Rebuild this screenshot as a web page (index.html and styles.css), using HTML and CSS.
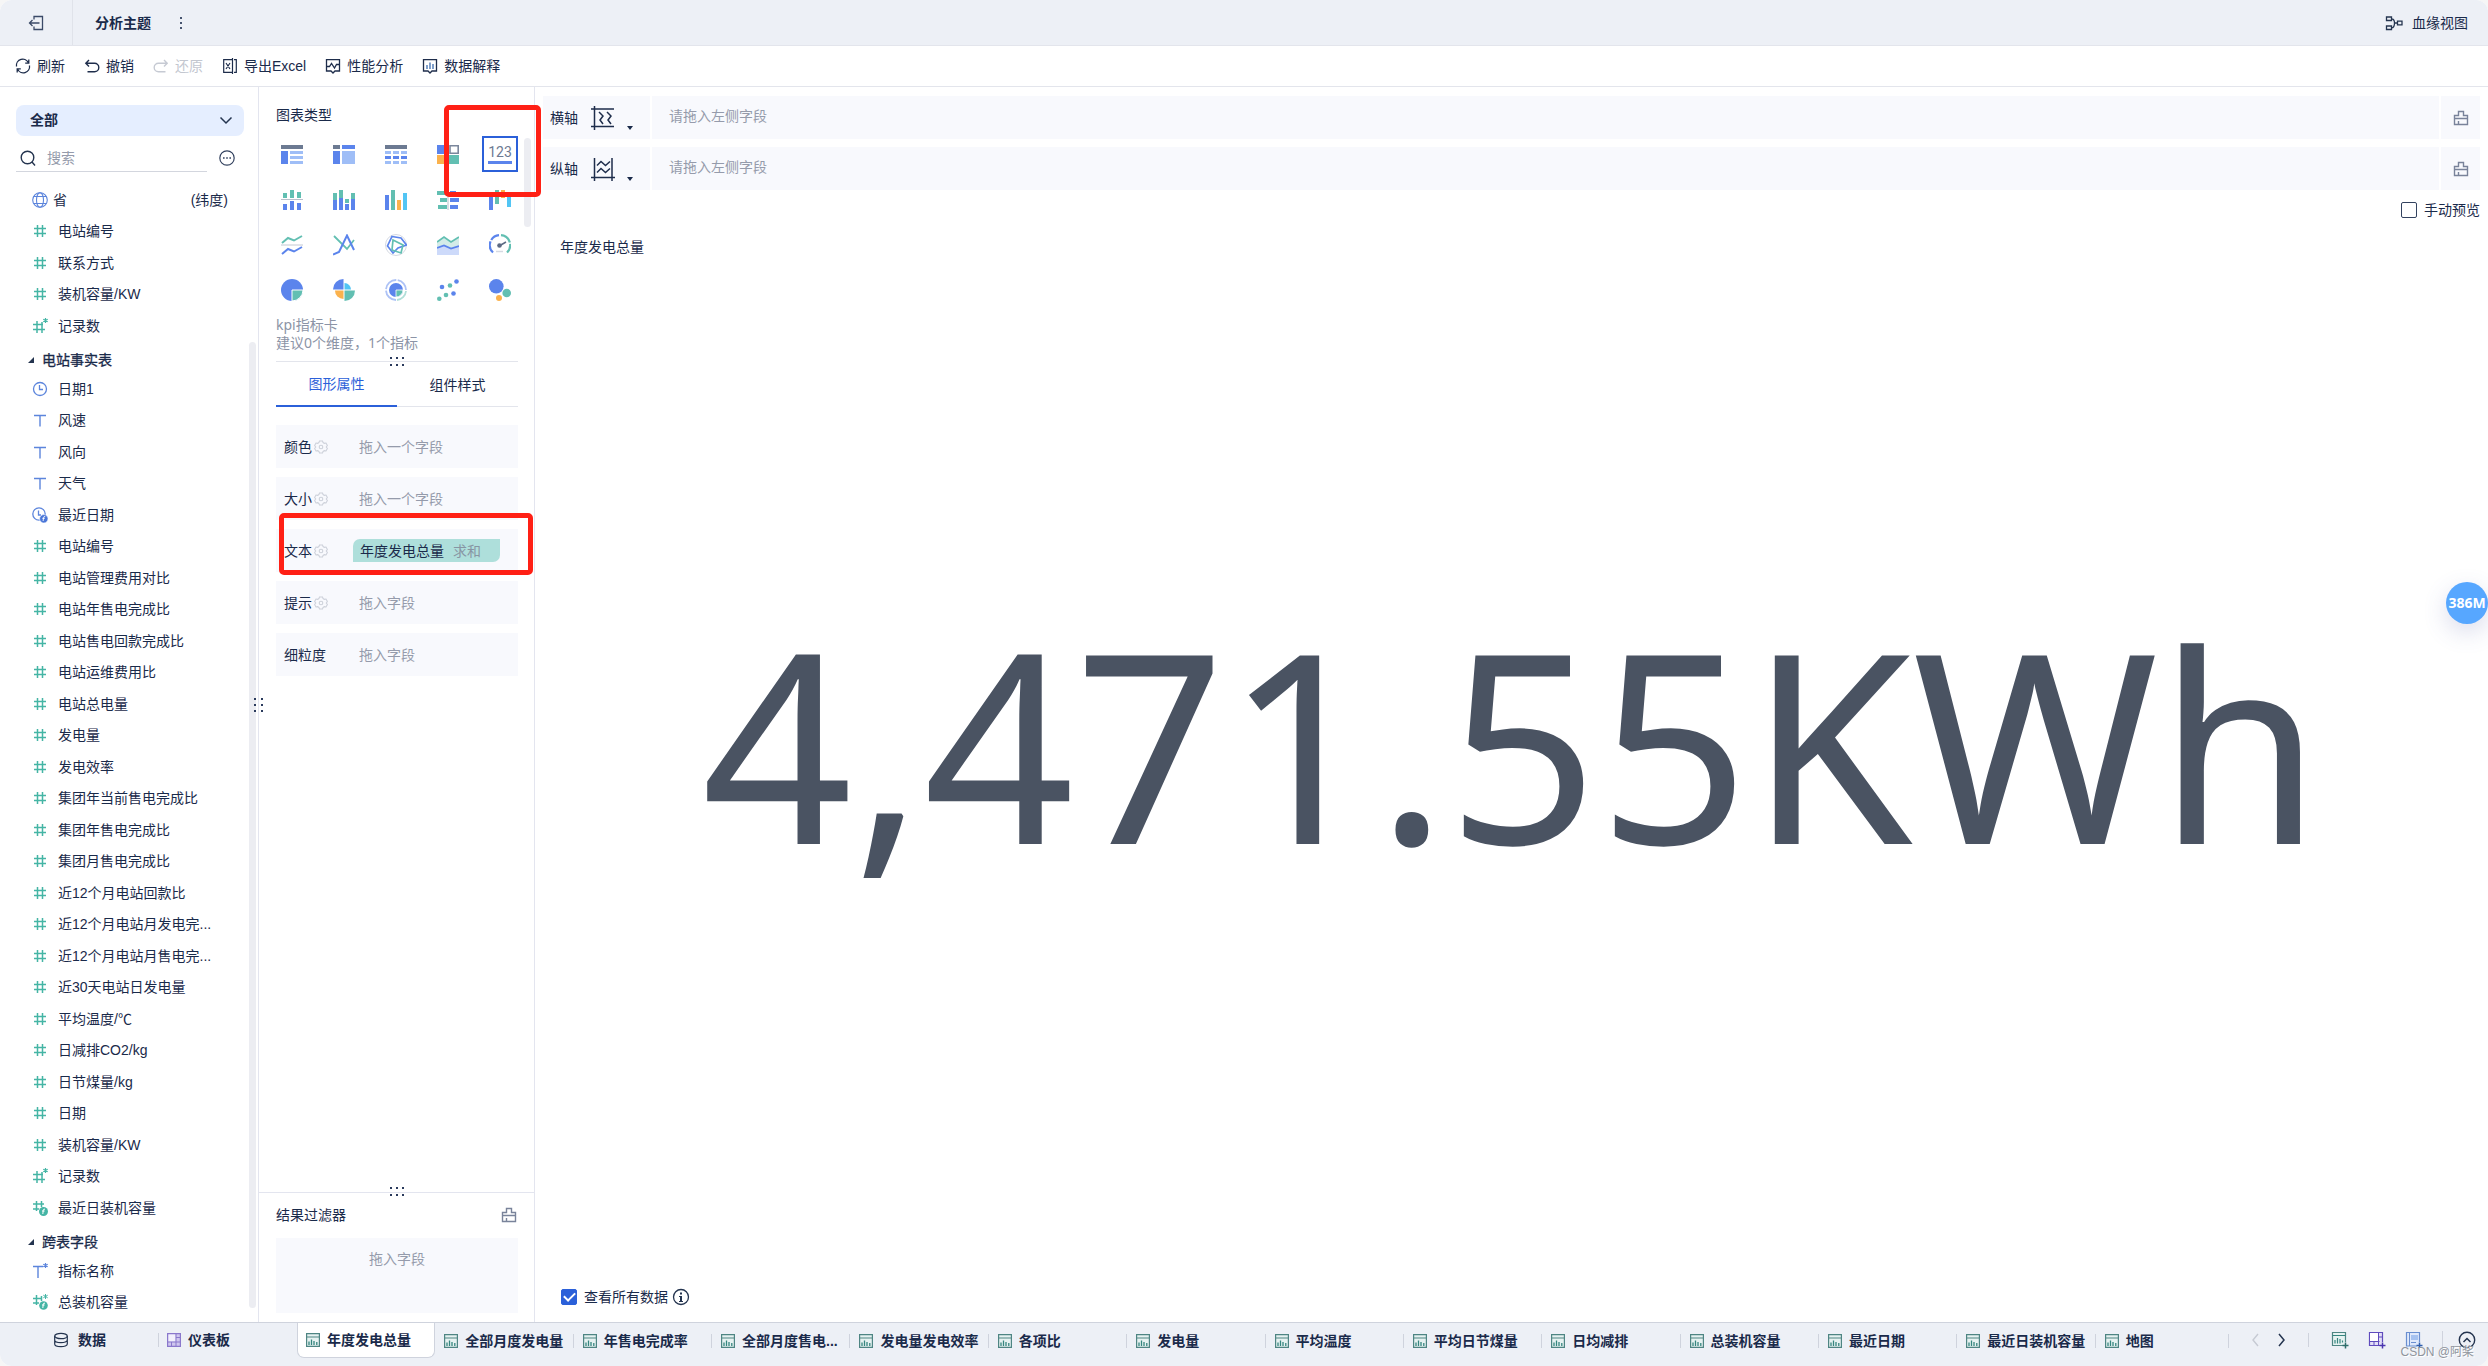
FILE: index.html
```html
<!DOCTYPE html>
<html lang="zh-CN">
<head>
<meta charset="utf-8">
<title>分析主题</title>
<link rel="stylesheet" href="styles.css">
</head>
<body>
<svg class="defs" aria-hidden="true">
  <symbol id="hash" viewBox="0 0 16 16"><path d="M5.500 2v12M10.500 2v12M2 5.500h12M2 10.500h12" fill="none" stroke="#45b5a5" stroke-width="1.500"/></symbol>
  <symbol id="hash-star" viewBox="0 0 16 16"><path d="M5 3v12M10 4v11M1 6.500h10M1 11.500h12" fill="none" stroke="#45b5a5" stroke-width="1.500"/><path d="M13.500 0v5M11.300 1.200l4.400 2.600M15.700 1.200l-4.400 2.600" stroke="#45b5a5" stroke-width="1.200"/></symbol>
  <symbol id="hash-fn" viewBox="0 0 16 16"><path d="M4.500 1v10M9.500 1v6M1 4h11M1 9h6" fill="none" stroke="#45b5a5" stroke-width="1.500"/><circle cx="11.500" cy="11.500" r="4.500" fill="#45b5a5"/><path d="M13 9.200q-1.500-.5-1.700 1l-.5 3.800M10 11h2.600" fill="none" stroke="#fff"/></symbol>
  <symbol id="hash-fn-star" viewBox="0 0 16 16"><path d="M4.500 1v10M9.500 2v5M1 4.500h9M1 9h6" fill="none" stroke="#45b5a5" stroke-width="1.500"/><path d="M13.500 0v5M11.300 1.200l4.400 2.600M15.700 1.200l-4.400 2.600" stroke="#45b5a5"/><circle cx="11.500" cy="11.500" r="4.300" fill="#45b5a5"/><path d="M13 9.200q-1.500-.5-1.700 1l-.5 3.800M10 11h2.600" fill="none" stroke="#fff"/></symbol>
  <symbol id="text" viewBox="0 0 16 16"><path d="M2 3.500h12M8 3.500v11" fill="none" stroke="#5c85dc" stroke-width="1.400"/></symbol>
  <symbol id="text-star" viewBox="0 0 16 16"><path d="M1 3.500h10M6 3.500v11.500" fill="none" stroke="#5c85dc" stroke-width="1.400"/><path d="M13.500 0v5M11.300 1.200l4.400 2.600M15.700 1.200l-4.400 2.600" stroke="#5c85dc" stroke-width="1.200"/></symbol>
  <symbol id="clock" viewBox="0 0 16 16"><circle cx="8" cy="8" r="6.500" fill="none" stroke="#5c85dc" stroke-width="1.300"/><path d="M7.500 4v4.500H11" fill="none" stroke="#5c85dc" stroke-width="1.300"/></symbol>
  <symbol id="clock-fn" viewBox="0 0 16 16"><circle cx="7" cy="7" r="6.200" fill="none" stroke="#5c85dc" stroke-width="1.300"/><path d="M6.500 3.500V8H9" fill="none" stroke="#5c85dc" stroke-width="1.300"/><circle cx="11.800" cy="11.800" r="4.200" fill="#4a76d8" stroke="#fff" stroke-width=".6"/><path d="M13.200 9.600q-1.400-.5-1.600 1l-.5 3.400M10.300 11.300h2.500" fill="none" stroke="#fff" stroke-width=".9"/></symbol>
  <symbol id="globe" viewBox="0 0 16 16"><g fill="none" stroke="#5c85dc" stroke-width="1.100"><circle cx="8" cy="8" r="7.300"/><ellipse cx="8" cy="8" rx="3.500" ry="7.300"/><path d="M1.500 4.500h13M1.500 11.500h13"/></g></symbol>
  <symbol id="brush" viewBox="0 0 16 16"><path d="M1.500 14.500v-9h4v-4h5v4h4v9zM1.500 8.500h13M5.500 14.500v-3.500" fill="none" stroke="#79839a" stroke-width="1.400"/></symbol>
  <symbol id="gear" viewBox="0 0 14 14"><path d="M5.500 1h3l.6 1.600 1.200.7 1.700-.3 1.400 2.500L12.300 7l1.100 1.500L12 11l-1.700-.3-1.200.7-.6 1.600h-3l-.6-1.600-1.200-.7L2 11 .6 8.500 1.700 7 .6 5.500 2 3l1.700.3 1.200-.7z" fill="none" stroke="#cdd1da" stroke-width="1.100"/><circle cx="7" cy="7" r="1.800" fill="none" stroke="#cdd1da" stroke-width="1.100"/></symbol>
  <symbol id="chart" viewBox="0 0 14 14"><path d="M.600.600h12.800v12.800H.600z" fill="#e6f2f1" stroke="#4e8583" stroke-width="1.200"/><path d="M.600 4h12.800" stroke="#4e8583"/><path d="M3 8.500V12M5.500 6.500V12M8 8V12M10.800 9V12" stroke="#35857f" stroke-width="1.300"/></symbol>
  <symbol id="dots-h" viewBox="0 0 16 10"><path d="M1 0h2v2H1zM7 0h2v2H7zM13 0h2v2h-2zM1 7h2v2H1zM7 7h2v2H7zM13 7h2v2h-2z" fill="#2a3a5c"/></symbol>
  <symbol id="dots-v" viewBox="0 0 10 14"><path d="M0 0h2v2H0zM7 0h2v2H7zM0 6h2v2H0zM7 6h2v2H7zM0 12h2v2H0zM7 12h2v2H7z" fill="#2a3a5c"/></symbol>
</svg>

<div class="app">
  <header class="header">
    <button class="exit" aria-label="退出"><svg class="i16" viewBox="0 0 16 16"><path d="M6 4.500V1.500h8.500v13H6V11.500M11.500 8H1.500M4.500 5L1.500 8l3 3" fill="none" stroke="#3b4a68" stroke-width="1.300"/></svg></button>
    <h1 class="title">分析主题</h1>
    <button class="more" aria-label="更多"><svg class="i16" viewBox="0 0 16 16"><path d="M7 2h2v2H7zM7 7h2v2H7zM7 12h2v2H7z" fill="#46546f"/></svg></button>
    <button class="lineage"><svg class="i18" viewBox="0 0 18 18"><path d="M1.500 3h5v3.500h-5zM1.500 12h5v3.500h-5zM12.500 7.200H17v3.600h-4.500zM6.500 4.800q3 0 3 4.200q0 4.800-3 4.800M9.500 9h3" fill="none" stroke="#24344f" stroke-width="1.300"/></svg>血缘视图</button>
  </header>

  <nav class="toolbar">
    <button><svg class="i16" viewBox="0 0 16 16"><path d="M1.500 8.500A6.300 6.300 0 0 1 13.500 5M14.500 7.500A6.300 6.300 0 0 1 2.500 11M13.800 1.500V5.200H10.200M2.200 14.500V10.800H5.800" fill="none" stroke="#1e2d4b" stroke-width="1.300"/></svg>刷新</button>
    <button><svg class="i16" viewBox="0 0 16 16"><path d="M5 2L1.800 5.200 5 8.400M2 5.200H10.500a4.300 4.300 0 0 1 0 8.600H3.500" fill="none" stroke="#1e2d4b" stroke-width="1.400"/></svg>撤销</button>
    <button disabled><svg class="i16" viewBox="0 0 16 16"><path d="M11 2l3.200 3.200L11 8.400M14 5.200H5.500a4.300 4.300 0 0 0 0 8.600h7" fill="none" stroke="#c6cad3" stroke-width="1.400"/></svg>还原</button>
    <button><svg class="i16" viewBox="0 0 16 16"><path d="M10 1.700H1.700v12.600H10M12 1.700h2.300v12.600H12M10.500 0v16M4 5l4 6M8 5l-4 6" fill="none" stroke="#1e2d4b" stroke-width="1.200"/></svg>导出Excel</button>
    <button><svg class="i16" viewBox="0 0 16 16"><path d="M6 13H1.500V1.700h13V13H10l-2 2zM2 8.500h2.500L6.500 5.500l3 4.500 2-3.500L14 6.500" fill="none" stroke="#1e2d4b" stroke-width="1.300"/></svg>性能分析</button>
    <button><svg class="i16" viewBox="0 0 16 16"><path d="M6 13H1.500V1.700h13V13H10l-2 2z" fill="none" stroke="#1e2d4b" stroke-width="1.300"/><path d="M5 7v4M8 4.500V11M11 6v5" stroke="#4b78b5" stroke-width="1.400"/></svg>数据解释</button>
  </nav>

  <div class="workspace">
    <aside class="fields">
      <button class="scope">全部<svg class="i14" viewBox="0 0 14 14"><path d="M1.500 4.500L7 10l5.500-5.500" fill="none" stroke="#24344f" stroke-width="1.500"/></svg></button>
      <div class="search-row">
        <label class="search"><svg class="i16" viewBox="0 0 16 16"><circle cx="7.500" cy="7.500" r="6.300" fill="none" stroke="#24344f" stroke-width="1.400"/><path d="M12 12l3 3.500" stroke="#24344f" stroke-width="1.400"/></svg><input type="text" placeholder="搜索" aria-label="搜索"></label>
        <button aria-label="更多选项"><svg class="i16" viewBox="0 0 16 16"><circle cx="8" cy="8" r="7.200" fill="none" stroke="#33425f" stroke-width="1.200"/><path d="M4 7.200h1.600v1.600H4zM7.200 7.200h1.600v1.600H7.200zM10.400 7.200H12v1.600h-1.600z" fill="#33425f"/></svg></button>
      </div>
      <ul class="field-list">
        <li class="geo"><svg class="i16"><use href="#globe"/></svg><span>省</span><em>(纬度)</em></li>
        <li><svg class="i16"><use href="#hash"/></svg>电站编号</li>
        <li><svg class="i16"><use href="#hash"/></svg>联系方式</li>
        <li><svg class="i16"><use href="#hash"/></svg>装机容量/KW</li>
        <li><svg class="i16"><use href="#hash-star"/></svg>记录数</li>
        <li class="group"><i class="tri"></i>电站事实表</li>
        <li><svg class="i16"><use href="#clock"/></svg>日期1</li>
        <li><svg class="i16"><use href="#text"/></svg>风速</li>
        <li><svg class="i16"><use href="#text"/></svg>风向</li>
        <li><svg class="i16"><use href="#text"/></svg>天气</li>
        <li><svg class="i16"><use href="#clock-fn"/></svg>最近日期</li>
        <li><svg class="i16"><use href="#hash"/></svg>电站编号</li>
        <li><svg class="i16"><use href="#hash"/></svg>电站管理费用对比</li>
        <li><svg class="i16"><use href="#hash"/></svg>电站年售电完成比</li>
        <li><svg class="i16"><use href="#hash"/></svg>电站售电回款完成比</li>
        <li><svg class="i16"><use href="#hash"/></svg>电站运维费用比</li>
        <li><svg class="i16"><use href="#hash"/></svg>电站总电量</li>
        <li><svg class="i16"><use href="#hash"/></svg>发电量</li>
        <li><svg class="i16"><use href="#hash"/></svg>发电效率</li>
        <li><svg class="i16"><use href="#hash"/></svg>集团年当前售电完成比</li>
        <li><svg class="i16"><use href="#hash"/></svg>集团年售电完成比</li>
        <li><svg class="i16"><use href="#hash"/></svg>集团月售电完成比</li>
        <li><svg class="i16"><use href="#hash"/></svg>近12个月电站回款比</li>
        <li><svg class="i16"><use href="#hash"/></svg>近12个月电站月发电完...</li>
        <li><svg class="i16"><use href="#hash"/></svg>近12个月电站月售电完...</li>
        <li><svg class="i16"><use href="#hash"/></svg>近30天电站日发电量</li>
        <li><svg class="i16"><use href="#hash"/></svg>平均温度/℃</li>
        <li><svg class="i16"><use href="#hash"/></svg>日减排CO2/kg</li>
        <li><svg class="i16"><use href="#hash"/></svg>日节煤量/kg</li>
        <li><svg class="i16"><use href="#hash"/></svg>日期</li>
        <li><svg class="i16"><use href="#hash"/></svg>装机容量/KW</li>
        <li><svg class="i16"><use href="#hash-star"/></svg>记录数</li>
        <li><svg class="i16"><use href="#hash-fn"/></svg>最近日装机容量</li>
        <li class="group"><i class="tri"></i>跨表字段</li>
        <li><svg class="i16"><use href="#text-star"/></svg>指标名称</li>
        <li><svg class="i16"><use href="#hash-fn-star"/></svg>总装机容量</li>
      </ul>
      <i class="scroll scroll-fields"></i>
      <svg class="grip-v"><use href="#dots-v"/></svg>
    </aside>

    <section class="config">
      <div class="types">
        <h2>图表类型</h2>
        <div class="type-grid">
          <button aria-label="分组表"><svg viewBox="0 0 22 22"><path d="M0 1h22v4H0z" fill="#6c7a92"/><path d="M0 7h7v13H0z" fill="#5b84ec"/><path d="M9 7h13v3H9zM9 12h13v3H9zM9 17h13v3H9z" fill="#9fbef7"/></svg></button>
          <button aria-label="交叉表"><svg viewBox="0 0 22 22"><path d="M0 1h7v4H0z" fill="#6c7a92"/><path d="M0 7h7v13H0zM9 1h13v4H9z" fill="#5b84ec"/><path d="M9 7h13v13H9z" fill="#9fbef7"/></svg></button>
          <button aria-label="明细表"><svg viewBox="0 0 22 22"><path d="M0 1h22v4H0z" fill="#6c7a92"/><path d="M0 7h6v3H0zM8 7h6v3H8zM16 7h6v3h-6zM0 17h6v3H0zM8 17h6v3H8zM16 17h6v3h-6z" fill="#9fbef7"/><path d="M0 12h6v3H0zM8 12h6v3H8zM16 12h6v3h-6z" fill="#5b84ec"/></svg></button>
          <button aria-label="颜色表"><svg viewBox="0 0 22 22"><path d="M0 1h10v9H0z" fill="#5b84ec"/><path d="M0 11h10v9H0z" fill="#fbb24d"/><path d="M12 11h10v9H12z" fill="#62bfb2"/><path d="M13 1.800h8.200v7.400H13z" fill="#fff" stroke="#7b879c" stroke-width="1.600"/></svg></button>
          <button class="selected" aria-label="kpi指标卡"><span>123</span></button>
          <button aria-label="对比柱状图"><svg viewBox="0 0 22 22"><path d="M2 4h4v5H2zM9 1h4v8H9zM16 3h4v6h-4z" fill="#62bfb2"/><path d="M0 10.500h22" stroke="#b9bfcb"/><path d="M2 15h4v6H2zM9 12h4v9H9zM16 14h4v7h-4z" fill="#5b84ec"/></svg></button>
          <button aria-label="堆积柱状图"><svg viewBox="0 0 22 22"><path d="M0 4h4v7H0zM6 1h4v8H6zM12 10h4v4h-4zM18 4h4v6h-4z" fill="#62bfb2"/><path d="M0 11h4v10H0zM6 9h4v12H6zM12 15h4v6h-4zM18 10h4v11h-4z" fill="#5b84ec"/></svg></button>
          <button aria-label="分区柱状图"><svg viewBox="0 0 22 22"><path d="M0 6h4v15H0z" fill="#5b84ec"/><path d="M6 1h4v20H6z" fill="#62bfb2"/><path d="M12 11h4v10h-4z" fill="#fbb24d"/><path d="M18 4h4v17h-4z" fill="#52c5f4"/></svg></button>
          <button aria-label="对比条形图"><svg viewBox="0 0 22 22"><path d="M0 2h10v4H0zM3 9h7v4H3zM1 16h9v4H1z" fill="#62bfb2"/><path d="M11 1v20" stroke="#b9bfcb"/><path d="M13 2h6v4h-6zM13 9h9v4h-9zM13 16h8v4h-8z" fill="#5b84ec"/></svg></button>
          <button aria-label="瀑布图"><svg viewBox="0 0 22 22"><path d="M0 3h4v18H0z" fill="#5b84ec"/><path d="M6 1h4v14H6z" fill="#62bfb2"/><path d="M12 1h4v8h-4z" fill="#fbb24d"/><path d="M18 6h4v12h-4z" fill="#52c5f4"/></svg></button>
          <button aria-label="分区折线图"><svg viewBox="0 0 22 22"><path d="M1 9l6-5 6 2.500L21 2" fill="none" stroke="#62bfb2" stroke-width="2"/><path d="M0 11h22" stroke="#c3c8d2"/><path d="M1 20l6-5 6 2.500 8-4.500" fill="none" stroke="#5b84ec" stroke-width="2"/></svg></button>
          <button aria-label="多系列折线图"><svg viewBox="0 0 22 22"><path d="M1 2l13 13 7-9" fill="none" stroke="#62bfb2" stroke-width="1.800"/><path d="M0 20.500l6-2.500L14 1.500 21 16" fill="none" stroke="#5b84ec" stroke-width="2"/></svg></button>
          <button aria-label="雷达图"><svg viewBox="0 0 22 22"><circle cx="11" cy="11" r="10.500" fill="none" stroke="#d5d9e2"/><path d="M7 2.500l9 1.500 5.500 7-8.500 3-5 5-5.500-7z" fill="none" stroke="#5b84ec" stroke-width="1.700"/><path d="M8 6l10 5-2 8-9-3z" fill="none" stroke="#62bfb2" stroke-width="1.700"/></svg></button>
          <button aria-label="面积图"><svg viewBox="0 0 22 22"><path d="M0 8l7-5 7 5 8-5v11H0z" fill="#d3ece8"/><path d="M0 14l7-3 7 3 8-3v10H0z" fill="#cddafa"/><path d="M0 8l7-5 7 5 8-5" fill="none" stroke="#62bfb2" stroke-width="1.700"/><path d="M0 14l7-2.500 7 3 8-2.500" fill="none" stroke="#5b84ec" stroke-width="1.700"/></svg></button>
          <button aria-label="仪表盘"><svg viewBox="0 0 22 22"><path d="M4 18.500A10 10 0 0 1 10 1.200" fill="none" stroke="#5b84ec" stroke-width="2.200" stroke-dasharray="12 1.500"/><path d="M12 1.200a10 10 0 0 1 6 17.300" fill="none" stroke="#62bfb2" stroke-width="2.200" stroke-dasharray="12 1.500"/><circle cx="10.500" cy="11.500" r="2.300" fill="#5c6a83"/><path d="M11 11.500l6-3.500" stroke="#5c6a83" stroke-width="1.500"/><path d="M7 17.500h7" stroke="#d5d9e2" stroke-width="1.500"/></svg></button>
          <button aria-label="饼图"><svg viewBox="0 0 22 22"><circle cx="11" cy="11" r="11" fill="#5b84ec"/><path d="M11 11h11a11 11 0 0 1-11 11z" fill="#62bfb2" stroke="#fff"/></svg></button>
          <button aria-label="玫瑰图"><svg viewBox="0 0 22 22"><path d="M10.500 10.500H0A10.500 10.500 0 0 1 10.500 0z" fill="#5b84ec"/><path d="M11.500 10.500V4a6.500 6.500 0 0 1 6.500 6.500z" fill="#52c5f4"/><path d="M10.500 11.500V20A8.500 8.500 0 0 1 2 11.500z" fill="#fbb24d"/><path d="M11.500 11.500H22A10.500 10.500 0 0 1 11.500 22z" fill="#62bfb2"/></svg></button>
          <button aria-label="多层饼图"><svg viewBox="0 0 22 22"><path d="M11 21A10 10 0 1 1 21 11" fill="none" stroke="#adc2f6" stroke-width="1.800" stroke-dasharray="15 1.500"/><path d="M21 12a10 10 0 0 1-9 9" fill="none" stroke="#b1dfd8" stroke-width="1.800"/><circle cx="11" cy="11" r="7" fill="#5b84ec"/><path d="M11 11h7a7 7 0 0 1-7 7z" fill="#62bfb2" stroke="#fff" stroke-width=".8"/></svg></button>
          <button aria-label="散点图"><svg viewBox="0 0 22 22"><g fill="#5b84ec"><circle cx="5" cy="8" r="2.300"/><circle cx="19.500" cy="2.500" r="2.300"/><circle cx="16.500" cy="14.500" r="2.300"/></g><g fill="#62bfb2"><circle cx="13" cy="6.500" r="2.300"/><circle cx="9" cy="16" r="2.300"/><circle cx="2.300" cy="19.700" r="2.300"/></g></svg></button>
          <button aria-label="气泡图"><svg viewBox="0 0 22 22"><circle cx="7.300" cy="7.300" r="7.300" fill="#5b84ec"/><circle cx="17.700" cy="14" r="4.300" fill="#62bfb2"/><circle cx="10" cy="19" r="3" fill="#fbb24d"/></svg></button>
        </div>
        <p class="hint">kpi指标卡<br>建议0个维度，1个指标</p>
        <i class="scroll scroll-types"></i>
        <svg class="grip-h"><use href="#dots-h"/></svg>
        <i class="mark mark-type"></i>
      </div>
      <div class="tabs">
        <button class="active">图形属性</button>
        <button>组件样式</button>
      </div>
      <div class="props">
        <div class="prop"><span class="name">颜色<svg class="i14"><use href="#gear"/></svg></span><span class="ph">拖入一个字段</span></div>
        <div class="prop"><span class="name">大小<svg class="i14"><use href="#gear"/></svg></span><span class="ph">拖入一个字段</span></div>
        <div class="prop"><span class="name">文本<svg class="i14"><use href="#gear"/></svg></span><span class="chip">年度发电总量<em>求和</em></span><i class="mark mark-text"></i></div>
        <div class="prop"><span class="name">提示<svg class="i14"><use href="#gear"/></svg></span><span class="ph">拖入字段</span></div>
        <div class="prop"><span class="name">细粒度</span><span class="ph">拖入字段</span></div>
      </div>
      <div class="filter">
        <svg class="grip-h"><use href="#dots-h"/></svg>
        <div class="filter-head"><h2>结果过滤器</h2><button aria-label="清空"><svg class="i16"><use href="#brush"/></svg></button></div>
        <div class="drop">拖入字段</div>
      </div>
    </section>

    <main class="main">
      <div class="axis">
        <div class="axis-name">横轴<button aria-label="横轴设置"><svg class="i24" viewBox="0 0 24 24"><path d="M3.500 0v24M0 3h23M0 20.500h23M8 6l4 4-3 4 3 4M16 6l4 4-3 4 3 4" fill="none" stroke="#1e2d4b" stroke-width="1.500"/></svg><i class="caret"></i></button></div>
        <div class="axis-drop">请拖入左侧字段</div>
        <button class="axis-clear" aria-label="清空横轴"><svg class="i16"><use href="#brush"/></svg></button>
      </div>
      <div class="axis">
        <div class="axis-name">纵轴<button aria-label="纵轴设置"><svg class="i24" viewBox="0 0 24 24"><path d="M3.500 1v23M21 1v23M0 20.500h24M6 8.500l4-4 4.500 4 4.500-4M6 15.500l4-4 4.500 4 4.500-4" fill="none" stroke="#1e2d4b" stroke-width="1.500"/></svg><i class="caret"></i></button></div>
        <div class="axis-drop">请拖入左侧字段</div>
        <button class="axis-clear" aria-label="清空纵轴"><svg class="i16"><use href="#brush"/></svg></button>
      </div>
      <label class="check preview"><input type="checkbox">手动预览</label>
      <h2 class="card-title">年度发电总量</h2>
      <div class="kpi">4,471.55KWh</div>
      <div class="view-all"><label class="check"><input type="checkbox" checked>查看所有数据</label><svg class="i18" viewBox="0 0 18 18"><circle cx="9" cy="9" r="7.500" fill="none" stroke="#24344f" stroke-width="1.300"/><path d="M8 4.500h2v2H8zM7 8h3v5h1v1H7v-1h1V9H7z" fill="#24344f"/></svg></div>
    </main>
  </div>

  <footer class="footer">
    <div class="fixed-tabs">
      <button class="data"><svg class="i16" viewBox="0 0 16 16"><g fill="none" stroke="#24344f" stroke-width="1.200"><ellipse cx="8" cy="4" rx="6.300" ry="2.700"/><path d="M1.700 4v8c0 3.600 12.600 3.600 12.600 0V4M1.700 8c0 3.600 12.600 3.600 12.600 0"/></g></svg>数据</button>
      <button class="board"><svg class="i14" viewBox="0 0 14 14"><path d="M.600.600h12.800v12.800H.600z" fill="#cfc6ee" stroke="#8a78cc" stroke-width="1.200"/><path d="M1.500 1.500h7v7h-7z" fill="#f2f0fc"/><path d="M9 0v14M0 9h14M9 4.500h5M4.500 9v5" stroke="#8a78cc"/></svg>仪表板</button>
    </div>
    <div class="sheets">
      <button class="active"><svg class="i14"><use href="#chart"/></svg>年度发电总量</button>
      <button><svg class="i14"><use href="#chart"/></svg>全部月度发电量</button>
      <button><svg class="i14"><use href="#chart"/></svg>年售电完成率</button>
      <button><svg class="i14"><use href="#chart"/></svg>全部月度售电...</button>
      <button><svg class="i14"><use href="#chart"/></svg>发电量发电效率</button>
      <button><svg class="i14"><use href="#chart"/></svg>各项比</button>
      <button><svg class="i14"><use href="#chart"/></svg>发电量</button>
      <button><svg class="i14"><use href="#chart"/></svg>平均温度</button>
      <button><svg class="i14"><use href="#chart"/></svg>平均日节煤量</button>
      <button><svg class="i14"><use href="#chart"/></svg>日均减排</button>
      <button><svg class="i14"><use href="#chart"/></svg>总装机容量</button>
      <button><svg class="i14"><use href="#chart"/></svg>最近日期</button>
      <button><svg class="i14"><use href="#chart"/></svg>最近日装机容量</button>
      <button><svg class="i14"><use href="#chart"/></svg>地图</button>
    </div>
    <div class="sheet-tools">
      <div class="pager">
        <button aria-label="上一页" disabled><svg class="i14" viewBox="0 0 14 14"><path d="M10 1L5 7l5 6" fill="none" stroke="#c6cad3" stroke-width="1.400"/></svg></button>
        <button aria-label="下一页"><svg class="i14" viewBox="0 0 14 14"><path d="M4 1l5 6-5 6" fill="none" stroke="#24344f" stroke-width="1.500"/></svg></button>
      </div>
      <div class="adders">
        <button aria-label="添加组件"><svg class="i18" viewBox="0 0 18 18"><path d="M12 14.500H1.500V1.500h13V11" fill="#e6f2f1" stroke="#4e8583" stroke-width="1.200"/><path d="M1.500 4.500h13M4 9v3.500M6.500 7v5.500M9 8v4.500M11.500 9.500v2" stroke="#35857f" stroke-width="1.200"/><path d="M14.500 11.500v6M11.500 14.500h6" stroke="#2f6e6b" stroke-width="1.500"/></svg></button>
        <button aria-label="添加仪表板"><svg class="i18" viewBox="0 0 18 18"><path d="M12 14.500H1.500V1.500h13V11" fill="#e3dff7" stroke="#5f4bbd" stroke-width="1.200"/><path d="M2 2h8v8H2z" fill="#fff"/><path d="M10.500 1.500v13M1.500 10.500h10M10.500 6h4M6 10.500v4" stroke="#5f4bbd"/><path d="M14.500 11.500v6M11.500 14.500h6" stroke="#4a35b0" stroke-width="1.500"/></svg></button>
        <button aria-label="添加报告"><svg class="i18" viewBox="0 0 18 18"><path d="M12 15H1.500V1.500h13V11" fill="#dfe9fb" stroke="#6a8fd0" stroke-width="1.200"/><path d="M4.500 1.500V15" stroke="#6a8fd0"/><path d="M6 4h7v5H6z" fill="#a6c2f0"/><path d="M6 11.500h5" stroke="#6a8fd0"/><path d="M14.500 11.500v6M11.500 14.500h6" stroke="#2f5fae" stroke-width="1.500"/></svg></button>
      </div>
      <button class="collapse" aria-label="收起"><svg class="i18" viewBox="0 0 18 18"><circle cx="9" cy="9" r="7.700" fill="none" stroke="#24344f" stroke-width="1.400"/><path d="M5.500 11L9 7.500l3.500 3.500" fill="none" stroke="#24344f" stroke-width="1.500"/></svg></button>
    </div>
    <span class="watermark">CSDN @阿桨</span>
  </footer>
  <div class="memory">386M</div>
</div>
</body>
</html>
```
FILE: styles.css
```css
* { box-sizing: border-box; }

body {
  margin: 0;
  background: #f6f6f6;
  color: #1a2a4a;
  font: 14px/20px "Liberation Sans", "Noto Sans CJK SC", sans-serif;
}

button {
  display: flex;
  align-items: center;
  padding: 0;
  border: 0;
  background: none;
  color: inherit;
  font: inherit;
  white-space: nowrap;
}

h1, h2, p, ul { margin: 0; padding: 0; font: inherit; }
em, i { font-style: normal; }
svg { display: block; flex: none; }

.defs { position: absolute; width: 0; height: 0; }
.i14 { width: 14px; height: 14px; }
.i16 { width: 16px; height: 16px; }
.i18 { width: 18px; height: 18px; }
.i24 { width: 24px; height: 24px; }

.app {
  position: relative;
  display: flex;
  flex-direction: column;
  min-height: 100vh;
  overflow: hidden;
  border-radius: 12px;
  background: #fff;
}

/* header and toolbar */
.header {
  display: flex;
  align-items: center;
  height: 46px;
  padding-right: 20px;
  background: #edf0f6;
  border-bottom: 1px solid #e3e5ec;
}
.exit {
  justify-content: center;
  width: 73px;
  height: 45px;
  border-right: 1px solid #e0e3ea;
}
.title { margin: 0 22px; font-weight: bold; }
.lineage { gap: 9px; margin-left: auto; }

.toolbar {
  display: flex;
  align-items: center;
  gap: 19px;
  height: 41px;
  padding-left: 15px;
  border-bottom: 1px solid #e3e5ec;
}
.toolbar button { gap: 6px; }
.toolbar button:disabled { color: #c3c7d0; }

.workspace { display: flex; flex: 1; }

/* field list */
.fields {
  position: relative;
  display: flex;
  flex-direction: column;
  flex: none;
  width: 259px;
  padding: 18px 14px 4px 16px;
  border-right: 1px solid #e3e5ef;
}
.scope {
  justify-content: space-between;
  height: 31px;
  padding: 0 11px 2px 14px;
  border-radius: 8px;
  background: #e5eeff;
  font-weight: bold;
}
.search-row { display: flex; align-items: center; gap: 12px; height: 36px; margin-bottom: 12px; }
.search {
  display: flex;
  align-items: center;
  gap: 9px;
  width: 191px;
  height: 36px;
  padding: 8px 4px 0;
  border-bottom: 1px solid #d3d6de;
}
.search-row button { height: 36px; padding-top: 8px; }
.search input {
  flex: 1;
  min-width: 0;
  border: 0;
  outline: 0;
  background: none;
  font: inherit;
}
input::placeholder { color: #959bab; opacity: 1; }

.field-list {
  display: grid;
  grid-auto-rows: 1fr;
  flex: 1;
  list-style: none;
}
.field-list li {
  display: flex;
  align-items: center;
  gap: 10px;
  min-height: 24px;
  padding-left: 16px;
  white-space: nowrap;
}
.field-list .geo { gap: 5px; padding-right: 16px; }
.geo em { margin-left: auto; }
.field-list .group { gap: 8px; padding: 6px 0 0 12px; -webkit-text-stroke: 0.3px #1a2a4a; }
.tri { border-left: 6px solid transparent; border-bottom: 6px solid #24344f; }

.scroll { position: absolute; width: 7px; border-radius: 4px; background: #ecedf2; }
.scroll-fields { top: 255px; bottom: 14px; right: 2px; }
.scroll-types { top: 51px; right: 3px; height: 89px; }

.grip-v { position: absolute; top: 50%; right: -6px; width: 10px; height: 14px; margin-top: -7px; }
.grip-h { position: absolute; left: 50%; bottom: -5px; width: 16px; height: 10px; margin-left: -8px; }

/* chart configuration */
.config {
  display: flex;
  flex-direction: column;
  flex: none;
  width: 276px;
  border-right: 1px solid #e3e5ef;
}
.types { position: relative; margin-left: 17px; padding: 18px 16px 10px 0; }
.types::after {
  content: "";
  position: absolute;
  left: 0;
  right: 16px;
  bottom: 0;
  border-bottom: 1px solid #e3e5ec;
}
.types .grip-h { margin-left: -16px; }
.type-grid {
  display: grid;
  grid-template-columns: repeat(5, 36px);
  grid-auto-rows: 36px;
  justify-content: space-between;
  row-gap: 9px;
  margin: 11px 0 9px -2px;
}
.type-grid button { justify-content: center; }
.type-grid svg { width: 22px; height: 22px; margin-top: 2px; }
.type-grid .selected { border: 2px solid #2b60d9; }
.selected span {
  height: 20px;
  border-bottom: 3px solid #5b84ec;
  color: #6c7a92;
  font: 14px/16px Roboto, sans-serif;
}
.hint { color: #8c94a6; font: 14px/18px "Noto Sans", "Noto Sans CJK SC", sans-serif; }

.mark { position: absolute; z-index: 2; border: 5px solid #ff2015; border-radius: 5px; }
.mark-type { top: 18px; right: -7px; width: 97px; height: 92px; }
.mark-text { top: -16px; left: 3px; right: -15px; height: 62px; }

.tabs { display: flex; margin: 0 16px 18px 17px; border-bottom: 1px solid #e3e5ec; }
.tabs button { flex: 1; justify-content: center; height: 45px; margin-bottom: -1px; }
.tabs .active { color: #2b60d9; border-bottom: 2px solid #2b60d9; }

.props { display: flex; flex-direction: column; gap: 9px; margin: 0 16px 0 17px; }
.prop {
  position: relative;
  display: flex;
  align-items: center;
  height: 43px;
  padding: 0 18px 0 8px;
  background: #f8f9fd;
}
.name { display: flex; align-items: center; gap: 2px; width: 69px; }
.ph, .drop, .axis-drop { color: #959bab; }
.ph { padding-left: 6px; }
.chip {
  display: flex;
  align-items: center;
  gap: 9px;
  flex: 1;
  height: 23px;
  padding-left: 7px;
  border-radius: 7px 0 7px 0;
  background: #aedfdb;
  white-space: nowrap;
}
.chip em { color: #8795a3; }

.filter {
  position: relative;
  margin-top: auto;
  padding: 12px 16px 9px 17px;
  border-top: 1px solid #e3e5ef;
}
.filter .grip-h { top: -6px; }
.filter-head { display: flex; justify-content: space-between; align-items: center; height: 20px; margin-bottom: 13px; padding-right: 1px; }
.drop { height: 75px; padding-top: 11px; background: #f8f9fd; text-align: center; }

/* preview */
.main {
  display: flex;
  flex-direction: column;
  flex: 1;
  min-width: 0;
  padding: 9px 8px 15px;
}
.axis { display: flex; gap: 2px; height: 43px; margin-bottom: 8px; }
.axis > * { background: #f8f9fd; }
.axis-name { display: flex; align-items: center; justify-content: space-between; width: 107px; padding: 0 17px 0 7px; }
.axis-name button { gap: 12px; }
.caret { margin-top: 20px; border: 3px solid transparent; border-top: 4px solid #1a2a4a; border-bottom: 0; }
.axis-drop { flex: 1; padding: 10px 17px; }
.axis-clear { justify-content: center; width: 39px; }

.check { display: flex; align-items: center; gap: 7px; }
.check input {
  appearance: none;
  display: grid;
  place-items: center;
  width: 16px;
  height: 16px;
  margin: 0;
  border: 1px solid #33425f;
  border-radius: 2px;
}
.check input:checked { border-color: #2b60d9; background: #2b60d9; }
.check input:checked::after {
  content: "";
  width: 5px;
  height: 9px;
  margin-bottom: 3px;
  border: solid #fff;
  border-width: 0 2px 2px 0;
  transform: rotate(45deg);
}
.preview { align-self: flex-end; margin: 2px 0 17px; }
.card-title { padding-left: 17px; }
.kpi {
  display: grid;
  place-items: center;
  flex: 1;
  padding-bottom: 60px;
  color: #4a5362;
  font: 264px/360px "Noto Sans", sans-serif;
}
.view-all { display: flex; align-items: center; gap: 4px; padding-left: 18px; }

/* sheet bar */
.footer {
  position: relative;
  display: flex;
  height: 44px;
  background: #edf0f6;
  border-top: 1px solid #cfd3dd;
}
.footer button { gap: 7px; }
.fixed-tabs { display: flex; align-items: center; width: 297px; height: 34px; font-weight: bold; }
.fixed-tabs .data { gap: 9px; width: 159px; height: 14px; padding-left: 53px; border-right: 1px solid #cfd3dd; }
.fixed-tabs .board { padding-left: 8px; }
.sheets {
  display: grid;
  grid-template-columns: repeat(14, minmax(0, 1fr));
  flex: 1;
  align-items: center;
  min-width: 0;
  height: 35px;
  font-weight: bold;
}
.sheets button { height: 14px; padding-left: 9px; border-right: 1px solid #cfd3dd; }
.sheets button:last-child { margin-right: 5px; }
.sheets .active {
  height: 35px;
  padding-left: 8px;
  border: 1px solid #cfd3dd;
  border-top: 0;
  border-radius: 0 0 7px 7px;
  background: #fff;
}
.sheet-tools { display: flex; align-items: center; width: 254px; height: 34px; }
.pager, .adders { display: flex; border-right: 1px solid #cfd3dd; }
.pager { gap: 13px; width: 75px; padding-left: 14px; }
.adders { gap: 19px; width: 134px; padding-left: 22px; }
.collapse { padding-left: 15px; }
.watermark { position: absolute; right: 14px; bottom: 4px; color: #8f949c; font-size: 12px; text-shadow: 1px 1px 0 #fff; }

.memory {
  position: absolute;
  top: 582px;
  right: 0;
  width: 42px;
  height: 42px;
  border-radius: 50%;
  background: #57a7ff;
  box-shadow: 0 8px 24px rgba(70, 80, 160, 0.2);
  color: #fff;
  font: bold 14px/42px "Noto Sans", sans-serif;
  text-align: center;
}
```
